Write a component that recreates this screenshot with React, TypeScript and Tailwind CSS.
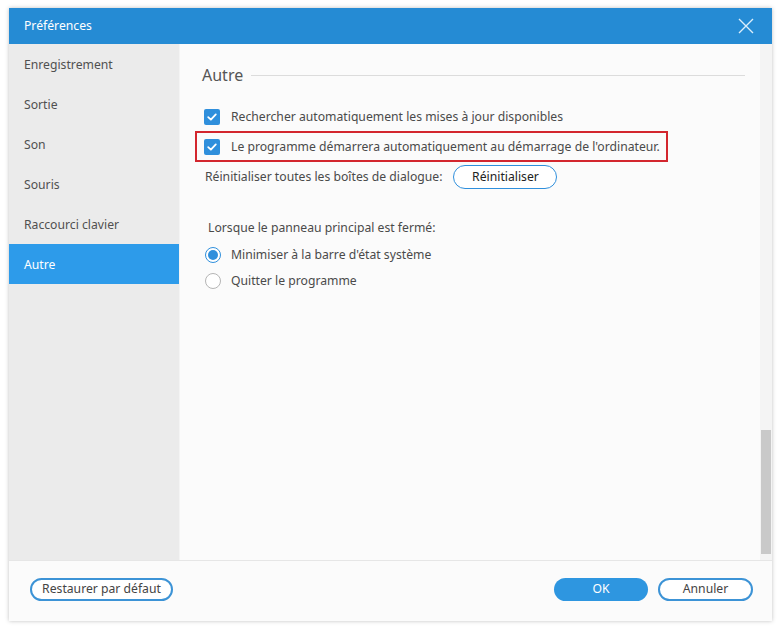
import React from "react";

const font = { fontFamily: '"Noto Sans", "Open Sans", sans-serif' };

function Check() {
  return (
    <span className="w-4 h-4 bg-[#2f8fdc] rounded-[2px] flex items-center justify-center shrink-0">
      <svg width="12" height="12" viewBox="0 0 12 12">
        <path d="M2.2 6.2 L4.9 8.7 L9.8 3.4" stroke="white" strokeWidth="1.8" fill="none" strokeLinecap="round" strokeLinejoin="round" />
      </svg>
    </span>
  );
}

function Radio({ on }: { on?: boolean }) {
  return on ? (
    <span className="w-4 h-4 rounded-full border border-[#2f8fdc] flex items-center justify-center shrink-0 bg-white">
      <span className="w-[10px] h-[10px] rounded-full bg-[#2f8fdc]" />
    </span>
  ) : (
    <span className="w-4 h-4 rounded-full border border-[#b5b5b5] bg-white shrink-0" />
  );
}

export default function App() {
  const items = ["Enregistrement", "Sortie", "Son", "Souris", "Raccourci clavier", "Autre"];
  return (
    <div className="w-[780px] h-[630px] bg-white pt-2 pl-[9px] text-[12.2px] leading-[18px]" style={font}>
      <div className="w-[763px] h-[613px] flex flex-col bg-[#fbfbfb] shadow-[0_0_4px_rgba(0,0,0,0.25)]">
        <div className="h-9 bg-[#258bd4] flex items-center justify-between pl-[15px] pr-[18px] shrink-0">
          <span className="text-white">Préférences</span>
          <svg width="16" height="16" viewBox="0 0 16 16">
            <path d="M1 1 L15 15 M15 1 L1 15" stroke="#dbeefb" strokeWidth="1.4" />
          </svg>
        </div>
        <div className="flex flex-1 min-h-0">
          <div className="w-[171px] bg-[#ebebeb] border-r border-[#f4f4f4] flex flex-col">
            {items.map((t) => (
              <div
                key={t}
                className={
                  "h-10 flex items-center pl-[15px] pt-[1px] " +
                  (t === "Autre" ? "bg-[#2d9bea] text-white" : "text-[#505050]")
                }
              >
                {t}
              </div>
            ))}
          </div>
          <div className="flex-1 flex relative">
            <div className="flex-1 pl-[22px] pr-[15px] pt-[19px]">
              <div className="flex items-center gap-[8px] h-6">
                <span className="text-[16px] leading-6 text-[#555]">Autre</span>
                <div className="flex-1 h-px bg-[#dcdcdc] mt-px" />
              </div>
              <div className="mt-[22px] pl-[2px] flex items-center gap-[11px] h-4">
                <Check />
                <span className="text-[#4a4a4a]">Rechercher automatiquement les mises à jour disponibles</span>
              </div>
              <div className="mt-[6px] -ml-[7px] w-[473px] h-[31px] border-2 border-[#d3262e] flex items-center pl-[7px] gap-[11px]">
                <Check />
                <span className="text-[#4a4a4a] whitespace-nowrap">Le programme démarrera automatiquement au démarrage de l'ordinateur.</span>
              </div>
              <div className="mt-[3px] pl-[3px] flex items-center gap-[11px] h-6">
                <span className="text-[#4a4a4a]">Réinitialiser toutes les boîtes de dialogue:</span>
                <button className="h-[24px] w-[104px] rounded-full border border-[#2f8fdc] bg-white text-[#222]">
                  Réinitialiser
                </button>
              </div>
              <div className="mt-[30px] pl-[6px] text-[#4a4a4a]">Lorsque le panneau principal est fermé:</div>
              <div className="mt-[9px] pl-[3px] flex items-center gap-[10px] h-[18px]">
                <Radio on />
                <span className="text-[#4a4a4a]">Minimiser à la barre d'état système</span>
              </div>
              <div className="mt-[8px] pl-[3px] flex items-center gap-[10px] h-[18px]">
                <Radio />
                <span className="text-[#4a4a4a]">Quitter le programme</span>
              </div>
            </div>
            <div className="w-[12px] bg-[#f4f4f4] flex flex-col justify-end pb-[6px] pl-[1px] pr-[1px]">
              <div className="h-[124px] bg-[#c9c9c9]" />
            </div>
          </div>
        </div>
        <div className="h-[61px] shrink-0 border-t border-[#e6e6e6] flex items-center pl-[21px] pr-[19px] pb-[4px]">
          <button className="h-[23px] w-[143px] rounded-full border-2 border-[#3c93d6] bg-white text-[#444]">
            Restaurer par défaut
          </button>
          <div className="flex-1" />
          <button className="h-[23px] w-[94px] rounded-full bg-[#2e96e0] text-white">OK</button>
          <button className="ml-[10px] h-[23px] w-[95px] rounded-full border-2 border-[#3c93d6] bg-white text-[#444]">
            Annuler
          </button>
        </div>
      </div>
    </div>
  );
}
